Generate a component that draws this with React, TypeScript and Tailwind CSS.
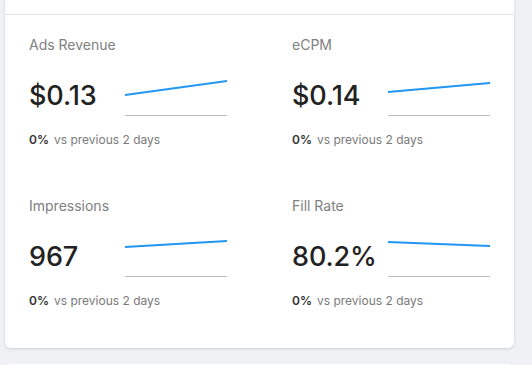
const stats = [
  { label: "Ads Revenue", value: "$0.13", y1: 20, y2: 6 },
  { label: "eCPM", value: "$0.14", y1: 17, y2: 8 },
  { label: "Impressions", value: "967", y1: 11, y2: 5 },
  { label: "Fill Rate", value: "80.2%", y1: 6, y2: 10 },
];

function Sparkline({ y1, y2 }: { y1: number; y2: number }) {
  return (
    <div className="h-[41px] w-[102px] border-b border-[#bdbdbd]">
      <svg width="102" height="40" viewBox="0 0 102 40" className="block">
        <line x1="0" y1={y1} x2="102" y2={y2} stroke="#2196f3" strokeWidth="2" />
      </svg>
    </div>
  );
}

function StatCell({ label, value, y1, y2 }: (typeof stats)[number]) {
  return (
    <div className="flex flex-col">
      <div className="text-[14px] leading-5 text-[#808080]">{label}</div>
      <div className="mt-5 flex items-center">
        <div className="w-[96px] text-[27px] leading-8 font-medium tracking-[-0.1px] text-[#222]">
          {value}
        </div>
        <Sparkline y1={y1} y2={y2} />
      </div>
      <div className="mt-4 text-[12px] leading-4 text-[#7a7a7a]">
        <span className="font-semibold text-[#333]">0%</span>
        <span className="ml-[5px]">vs previous 2 days</span>
      </div>
    </div>
  );
}

export default function App() {
  return (
    <div
      className="h-[365px] w-[532px] overflow-hidden bg-[#f0f1f4] px-[5px]"
      style={{ fontFamily: "Inter, 'Noto Sans', sans-serif" }}
    >
      <div className="w-[509px] rounded-b-md bg-white shadow-[0_1px_3px_rgba(0,0,0,0.15)]">
        <div className="h-[15px] border-b border-[#e0e0e0]" />
        <div className="grid grid-cols-[263px_1fr] gap-y-[48px] pt-5 pr-6 pb-[39px] pl-6">
          {stats.map((s) => (
            <StatCell key={s.label} {...s} />
          ))}
        </div>
      </div>
      <div className="mt-4 h-6 w-[509px] rounded-t-md bg-white" />
    </div>
  );
}
